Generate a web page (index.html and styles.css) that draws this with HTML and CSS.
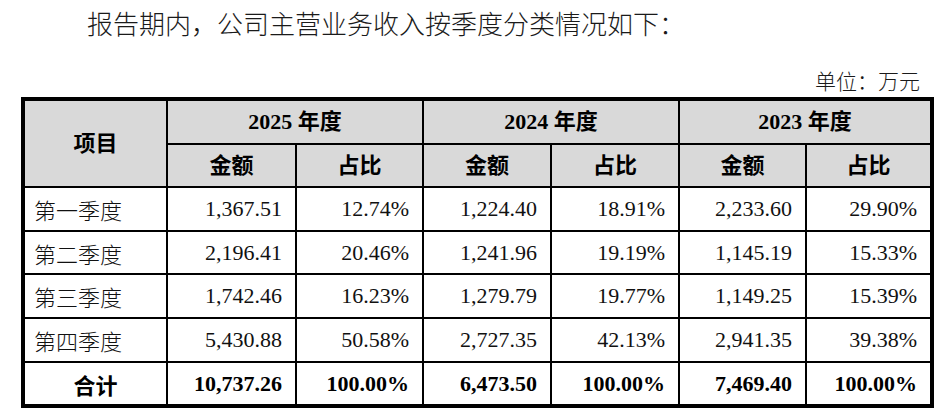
FILE: index.html
```html
<!DOCTYPE html>
<html lang="zh-CN">
<head>
<meta charset="utf-8">
<title>主营业务收入按季度分类</title>
<link rel="stylesheet" href="styles.css">
</head>
<body>
<div class="page">
  <p class="intro">报告期内，公司主营业务收入按季度分类情况如下：</p>
  <p class="unit">单位：万元</p>
  <table class="data">
    <colgroup>
      <col class="c1"><col class="c2"><col class="c3"><col class="c4"><col class="c5"><col class="c6"><col class="c7">
    </colgroup>
    <thead>
      <tr class="h1">
        <th rowspan="2" class="br bb">项目</th>
        <th colspan="2" class="br bb">2025 年度</th>
        <th colspan="2" class="br bb">2024 年度</th>
        <th colspan="2" class="bb">2023 年度</th>
      </tr>
      <tr class="h2">
        <th class="br bb">金额</th><th class="br bb">占比</th>
        <th class="br bb">金额</th><th class="br bb">占比</th>
        <th class="br bb">金额</th><th class="bb">占比</th>
      </tr>
    </thead>
    <tbody>
      <tr class="r44">
        <td class="lbl br bb">第一季度</td>
        <td class="num br bb">1,367.51</td><td class="num br bb">12.74%</td>
        <td class="num br bb">1,224.40</td><td class="num br bb">18.91%</td>
        <td class="num br bb">2,233.60</td><td class="num bb">29.90%</td>
      </tr>
      <tr class="r43">
        <td class="lbl br bb">第二季度</td>
        <td class="num br bb">2,196.41</td><td class="num br bb">20.46%</td>
        <td class="num br bb">1,241.96</td><td class="num br bb">19.19%</td>
        <td class="num br bb">1,145.19</td><td class="num bb">15.33%</td>
      </tr>
      <tr class="r44">
        <td class="lbl br bb">第三季度</td>
        <td class="num br bb">1,742.46</td><td class="num br bb">16.23%</td>
        <td class="num br bb">1,279.79</td><td class="num br bb">19.77%</td>
        <td class="num br bb">1,149.25</td><td class="num bb">15.39%</td>
      </tr>
      <tr class="r44">
        <td class="lbl br bb">第四季度</td>
        <td class="num br bb">5,430.88</td><td class="num br bb">50.58%</td>
        <td class="num br bb">2,727.35</td><td class="num br bb">42.13%</td>
        <td class="num br bb">2,941.35</td><td class="num bb">39.38%</td>
      </tr>
      <tr class="total r41">
        <td class="ctr br">合计</td>
        <td class="num br">10,737.26</td><td class="num br">100.00%</td>
        <td class="num br">6,473.50</td><td class="num br">100.00%</td>
        <td class="num br">7,469.40</td><td class="num">100.00%</td>
      </tr>
    </tbody>
  </table>
</div>
</body>
</html>
```

FILE: styles.css
```css
html, body {
  margin: 0;
  padding: 0;
  background: #ffffff;
}

.page {
  font-family: "Liberation Serif", "Noto Sans CJK SC", serif;
  color: #111111;
}

.intro {
  margin: 0;
  padding-left: 87px;
  height: 46px;
  line-height: 46px;
  font-size: 26px;
  font-family: "Noto Sans CJK SC", sans-serif;
  font-weight: 300;
  color: #1a1a1a;
}

.unit {
  margin: 19px 0 0 0;
  width: 920px;
  text-align: right;
  line-height: 30px;
  height: 30px;
  font-size: 21px;
  font-family: "Noto Sans CJK SC", sans-serif;
  font-weight: 300;
  color: #1a1a1a;
}

.data {
  margin: 2px 0 0 21px;
  width: 913px;
  table-layout: fixed;
  border-collapse: separate;
  border-spacing: 0;
  border: 4px solid #000;
  font-size: 22px;
}

.c1 { width: 143px; }
.c2 { width: 129px; }
.c3 { width: 127px; }
.c4 { width: 128px; }
.c5 { width: 128px; }
.c6 { width: 127px; }
.c7 { width: 123px; }

.data th,
.data td {
  padding: 0;
  box-sizing: border-box;
  line-height: 1;
  white-space: nowrap;
}

.data th {
  background: #d9d9d9;
  font-family: "Liberation Serif", "Noto Sans CJK SC", serif;
  font-weight: 700;
  text-align: center;
  color: #000;
}

.br { border-right: 2px solid #000; }
.bb { border-bottom: 2px solid #000; }

.h1 { height: 44px; }
.h2 { height: 43px; }
.r44 { height: 44px; }
.r43 { height: 43px; }
.r41 { height: 41px; }

.data td {
  color: #111;
}

.lbl {
  text-align: left;
  padding-left: 9px !important;
  font-family: "Noto Sans CJK SC", sans-serif;
  font-weight: 300;
}

.num {
  text-align: right;
  padding-right: 13px !important;
}

.ctr {
  text-align: center;
  font-family: "Noto Sans CJK SC", sans-serif;
}

.total td {
  font-weight: 700;
  color: #000;
}
```
